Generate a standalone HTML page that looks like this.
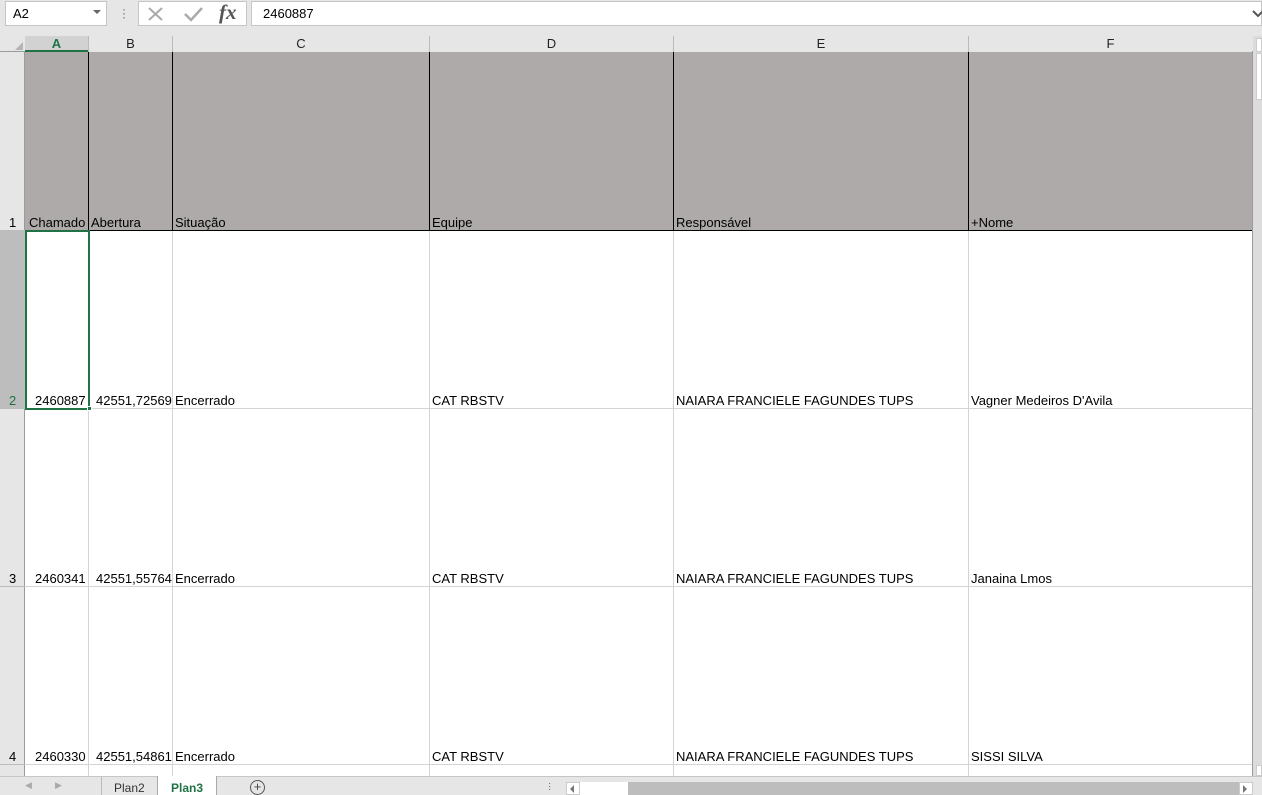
<!DOCTYPE html>
<html><head><style>
*{margin:0;padding:0;box-sizing:border-box}
body{width:1262px;height:795px;overflow:hidden;background:#fff;font-family:"Liberation Sans",Arial,sans-serif;font-size:13px;color:#000;position:relative}
.a{position:absolute}
.hdr{background:#e6e6e6;text-align:center;font-size:13px;color:#222;line-height:16px}
.cell{white-space:nowrap;font-size:13px}
</style></head><body>
<div class="a" style="left:0;top:0;width:1262px;height:36px;background:#e6e6e6"></div>
<div class="a" style="left:5px;top:1px;width:102px;height:25px;background:#fff;border:1px solid #c6c6c6"></div>
<div class="a" style="left:13px;top:6px;font-size:13px">A2</div>
<div class="a" style="left:93px;top:10px;width:0;height:0;border-left:4px solid transparent;border-right:4px solid transparent;border-top:4px solid #666"></div>
<div class="a" style="left:122px;top:7px;color:#666;font-size:12px;line-height:4px">·<br>·<br>·</div>
<div class="a" style="left:138px;top:1px;width:109px;height:25px;background:#fff;border:1px solid #c6c6c6"></div>
<svg class="a" style="left:146px;top:5px" width="20" height="18"><path d="M3 3L16 15M16 3L3 15" stroke="#aaa" stroke-width="2"/></svg>
<svg class="a" style="left:183px;top:5px" width="22" height="18"><path d="M2 9L8 15L19 3" stroke="#aaa" stroke-width="2.5" fill="none"/></svg>
<div class="a" style="left:219px;top:0px;font-family:'Liberation Serif',serif;font-style:italic;font-weight:bold;font-size:21px;color:#555">fx</div>
<div class="a" style="left:251px;top:1px;width:1011px;height:25px;background:#fff;border:1px solid #c6c6c6"></div>
<div class="a" style="left:263px;top:6px;font-size:13px">2460887</div>
<svg class="a" style="left:1252px;top:9px" width="10" height="10"><path d="M1 2L6 7L11 2" stroke="#555" stroke-width="2" fill="none"/></svg>
<div class="a hdr" style="left:0;top:36px;width:1256px;height:16px;border-bottom:1px solid #9b9b9b"></div>
<svg class="a" style="left:14px;top:41px" width="10" height="10"><path d="M9 1L9 9L1 9Z" fill="#b5b5b5"/></svg>
<div class="a hdr" style="left:25px;top:36px;width:63px;height:16px;background:#d2d2d2;color:#217346;border-bottom:2px solid #217346;font-weight:bold">A</div>
<div class="a hdr" style="left:88px;top:36px;width:84px;height:16px;border-left:1px solid #bbb">B</div>
<div class="a hdr" style="left:172px;top:36px;width:257px;height:16px;border-left:1px solid #bbb">C</div>
<div class="a hdr" style="left:429px;top:36px;width:244px;height:16px;border-left:1px solid #bbb">D</div>
<div class="a hdr" style="left:673px;top:36px;width:295px;height:16px;border-left:1px solid #bbb">E</div>
<div class="a hdr" style="left:968px;top:36px;width:284px;height:16px;border-left:1px solid #bbb">F</div>
<div class="a" style="left:0;top:52px;width:25px;height:724px;background:#e6e6e6;border-right:1px solid #9b9b9b"></div>
<div class="a" style="left:0;top:230px;width:25px;height:178px;background:#bdbdbd"></div>
<div class="a" style="left:9px;top:215px;font-size:13px">1</div>
<div class="a" style="left:9px;top:393px;font-size:13px;color:#217346">2</div>
<div class="a" style="left:9px;top:571px;font-size:13px">3</div>
<div class="a" style="left:9px;top:749px;font-size:13px">4</div>
<div class="a" style="left:0;top:408px;width:25px;height:1px;background:#bbb"></div>
<div class="a" style="left:0;top:586px;width:25px;height:1px;background:#bbb"></div>
<div class="a" style="left:0;top:764px;width:25px;height:1px;background:#bbb"></div>
<div class="a" style="left:25px;top:52px;width:1227px;height:179px;background:#aeaaaa;border-bottom:1px solid #000"></div>
<div class="a" style="left:88px;top:52px;width:1px;height:178px;background:#000"></div>
<div class="a" style="left:172px;top:52px;width:1px;height:178px;background:#000"></div>
<div class="a" style="left:429px;top:52px;width:1px;height:178px;background:#000"></div>
<div class="a" style="left:673px;top:52px;width:1px;height:178px;background:#000"></div>
<div class="a" style="left:968px;top:52px;width:1px;height:178px;background:#000"></div>
<div class="a" style="left:1252px;top:52px;width:1px;height:724px;background:#9b9b9b"></div>
<div class="a" style="left:88px;top:231px;width:1px;height:545px;background:#d4d4d4"></div>
<div class="a" style="left:172px;top:231px;width:1px;height:545px;background:#d4d4d4"></div>
<div class="a" style="left:429px;top:231px;width:1px;height:545px;background:#d4d4d4"></div>
<div class="a" style="left:673px;top:231px;width:1px;height:545px;background:#d4d4d4"></div>
<div class="a" style="left:968px;top:231px;width:1px;height:545px;background:#d4d4d4"></div>
<div class="a" style="left:25px;top:408px;width:1227px;height:1px;background:#d4d4d4"></div>
<div class="a" style="left:25px;top:586px;width:1227px;height:1px;background:#d4d4d4"></div>
<div class="a" style="left:25px;top:764px;width:1227px;height:1px;background:#d4d4d4"></div>
<div class="a cell" style="left:29px;top:215px">Chamado</div>
<div class="a cell" style="left:91px;top:215px">Abertura</div>
<div class="a cell" style="left:175px;top:215px">Situação</div>
<div class="a cell" style="left:432px;top:215px">Equipe</div>
<div class="a cell" style="left:676px;top:215px">Responsável</div>
<div class="a cell" style="left:971px;top:215px">+Nome</div>
<div class="a cell" style="left:35px;top:393px">2460887</div>
<div class="a cell" style="left:96px;top:393px">42551,72569</div>
<div class="a cell" style="left:175px;top:393px">Encerrado</div>
<div class="a cell" style="left:432px;top:393px">CAT RBSTV</div>
<div class="a cell" style="left:676px;top:393px">NAIARA FRANCIELE FAGUNDES TUPS</div>
<div class="a cell" style="left:971px;top:393px">Vagner Medeiros D'Avila</div>
<div class="a cell" style="left:35px;top:571px">2460341</div>
<div class="a cell" style="left:96px;top:571px">42551,55764</div>
<div class="a cell" style="left:175px;top:571px">Encerrado</div>
<div class="a cell" style="left:432px;top:571px">CAT RBSTV</div>
<div class="a cell" style="left:676px;top:571px">NAIARA FRANCIELE FAGUNDES TUPS</div>
<div class="a cell" style="left:971px;top:571px">Janaina Lmos</div>
<div class="a cell" style="left:35px;top:749px">2460330</div>
<div class="a cell" style="left:96px;top:749px">42551,54861</div>
<div class="a cell" style="left:175px;top:749px">Encerrado</div>
<div class="a cell" style="left:432px;top:749px">CAT RBSTV</div>
<div class="a cell" style="left:676px;top:749px">NAIARA FRANCIELE FAGUNDES TUPS</div>
<div class="a cell" style="left:971px;top:749px">SISSI SILVA</div>
<div class="a" style="left:25px;top:230px;width:65px;height:180px;border:2px solid #217346"></div>
<div class="a" style="left:87px;top:406px;width:5px;height:5px;background:#217346;border:1px solid #fff"></div>
<div class="a" style="left:1253px;top:36px;width:9px;height:740px;background:#dcdcdc"></div>
<div class="a" style="left:1256px;top:38px;width:6px;height:14px;background:#fff;border:1px solid #ccc"></div>
<div class="a" style="left:1256px;top:53px;width:6px;height:47px;background:#fff;border:1px solid #ccc"></div>
<div class="a" style="left:1256px;top:765px;width:6px;height:11px;background:#fff;border:1px solid #ccc"></div>
<div class="a" style="left:0;top:776px;width:1262px;height:19px;background:#e6e6e6;border-top:1px solid #c6c6c6"></div>
<div class="a" style="left:25px;top:780px;color:#aaa;font-size:9px">◀</div>
<div class="a" style="left:55px;top:780px;color:#aaa;font-size:9px">▶</div>
<div class="a" style="left:101px;top:777px;width:1px;height:18px;background:#bbb"></div>
<div class="a" style="left:114px;top:781px;font-size:12px;color:#333">Plan2</div>
<div class="a" style="left:157px;top:776px;width:60px;height:19px;background:#fff;border-left:1px solid #aaa;border-right:1px solid #aaa"></div>
<div class="a" style="left:171px;top:781px;font-size:12px;font-weight:bold;color:#217346">Plan3</div>
<div class="a" style="left:250px;top:780px;width:15px;height:15px;border:1px solid #555;border-radius:50%;text-align:center;line-height:12px;font-size:13px;color:#444">+</div>
<div class="a" style="left:548px;top:782px;color:#666;font-size:10px;line-height:3px">·<br>·<br>·</div>
<div class="a" style="left:566px;top:782px;width:687px;height:13px;background:#bdbdbd"></div>
<div class="a" style="left:566px;top:782px;width:14px;height:13px;background:#fff;border:1px solid #ccc"></div>
<div class="a" style="left:580px;top:782px;width:48px;height:13px;background:#fff"></div>
<div class="a" style="left:1239px;top:782px;width:14px;height:13px;background:#fff;border:1px solid #ccc"></div>
<div class="a" style="left:1243px;top:785px;width:0;height:0;border-top:4px solid transparent;border-bottom:4px solid transparent;border-left:4px solid #777"></div>
<div class="a" style="left:570px;top:785px;width:0;height:0;border-top:4px solid transparent;border-bottom:4px solid transparent;border-right:4px solid #777"></div>
</body></html>
